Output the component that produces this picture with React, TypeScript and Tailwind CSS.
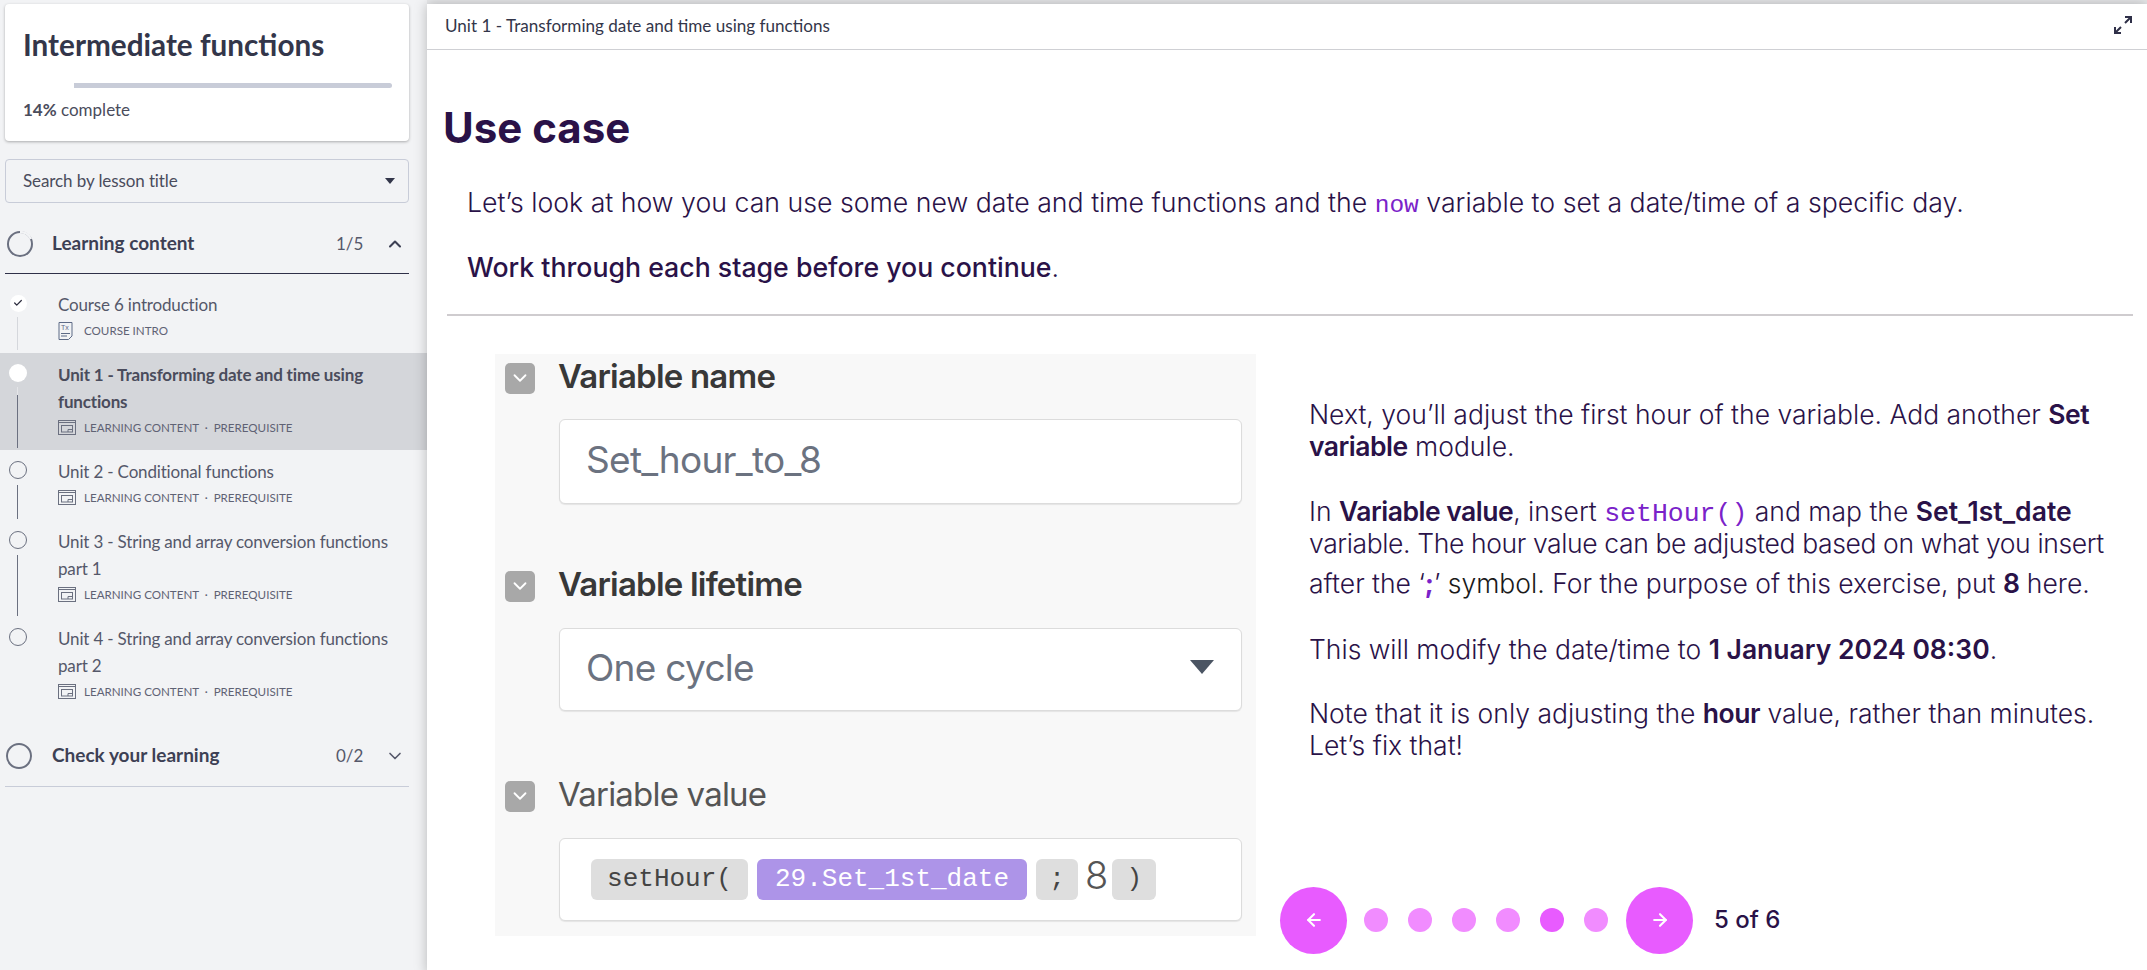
import React from "react";
import { ArrowLeft, ArrowRight, ChevronDown, ChevronUp, Check } from "lucide-react";

const side = "font-['Lato','Noto_Sans',sans-serif]";

function ContentIcon() {
  return (
    <svg width="18" height="15" viewBox="0 0 18 15" fill="none" stroke="#6b7080" strokeWidth="1" className="shrink-0">
      <rect x="0.5" y="0.5" width="17" height="14" />
      <path d="M0.5 2.5H17.5" />
      <rect x="3.5" y="5.5" width="11" height="6.5" />
      <path d="M10 12V9.5H14.5" />
    </svg>
  );
}

function DocIcon() {
  return (
    <svg width="15" height="18" viewBox="0 0 15 18" fill="none" stroke="#5d6a86" strokeWidth="1" className="shrink-0">
      <path d="M1 .5H14V14L10.5 17.5H1Z" />
      <path d="M3 11.5H12M3 14H9" />
      <text x="3" y="8" fontSize="7" fill="#5d6a86" stroke="none" fontFamily="Liberation Sans, sans-serif">Tx</text>
    </svg>
  );
}

type Item = {
  title: string[];
  sub: string;
  kind: "done" | "active" | "todo";
  line: "light" | "mixed" | "dark" | "none";
  doc?: boolean;
};

const items: Item[] = [
  { title: ["Course 6 introduction"], sub: "COURSE INTRO", kind: "done", line: "light", doc: true },
  { title: ["Unit 1 - Transforming date and time using", "functions"], sub: "LEARNING CONTENT  ·  PREREQUISITE", kind: "active", line: "mixed" },
  { title: ["Unit 2 - Conditional functions"], sub: "LEARNING CONTENT  ·  PREREQUISITE", kind: "todo", line: "dark" },
  { title: ["Unit 3 - String and array conversion functions", "part 1"], sub: "LEARNING CONTENT  ·  PREREQUISITE", kind: "todo", line: "dark" },
  { title: ["Unit 4 - String and array conversion functions", "part 2"], sub: "LEARNING CONTENT  ·  PREREQUISITE", kind: "todo", line: "none" },
];

function Row({ item }: { item: Item }) {
  const active = item.kind === "active";
  return (
    <div className={`flex pt-[8px] pb-[10px] pl-[9px] ${active ? "bg-[#d4d6da]" : ""}`}>
      <div className="w-[49px] shrink-0 flex flex-col items-start">
        <div className="w-[18px] h-[18px] mt-[3px] flex items-center justify-center shrink-0">
          {item.kind === "done" && (
            <div className="w-[17px] h-[17px] rounded-full bg-white flex items-center justify-center">
              <Check size={10} strokeWidth={3} color="#2d2d3f" />
            </div>
          )}
          {item.kind === "active" && <div className="w-[18px] h-[18px] rounded-full bg-white" />}
          {item.kind === "todo" && <div className="w-[18px] h-[18px] rounded-full border border-[#6b7080]" />}
        </div>
        {item.line === "light" && <div className="w-px flex-1 ml-[8px] mt-[5px] -mb-[7px] bg-[#d5d7dc]" />}
        {item.line === "dark" && <div className="w-px flex-1 ml-[8px] mt-[6px] -mb-[9px] bg-[#6b7080]" />}
        {item.line === "mixed" && (
          <div className="w-px flex-1 ml-[8px] mt-[5px] -mb-[8px] flex flex-col">
            <div className="h-[8px] bg-[#e4e5e8]" />
            <div className="flex-1 bg-[#6b7080]" />
          </div>
        )}
      </div>
      <div className="flex-1">
        {item.title.map((t) => (
          <div key={t} className={`text-[17px] leading-[27px] tracking-[-0.17px] whitespace-nowrap ${active ? "font-bold text-[#4a4c5c]" : "text-[#55586a]"}`}>
            {t}
          </div>
        ))}
        <div className="h-[25px] flex items-center gap-[8px]">
          {item.doc ? <span className="w-[18px] flex"><DocIcon /></span> : <ContentIcon />}
          <span className="text-[11.6px] text-[#5f6274] whitespace-pre">{item.sub}</span>
        </div>
      </div>
    </div>
  );
}

function Sidebar() {
  return (
    <aside className={`w-[427px] shrink-0 h-full bg-[#f2f3f5] pt-[4px] ${side}`}>
      <div className="mx-[5px] w-[404px] h-[137px] bg-white rounded-[4px] shadow-[0_1px_3px_rgba(0,0,0,0.3)] pl-[18px] pr-[17px] pt-[22px]">
        <h1 className="text-[29.7px] leading-[38px] font-bold text-[#33364a] whitespace-nowrap">Intermediate functions</h1>
        <div className="mt-[19px] h-[5px] flex">
          <div className="w-[51px] bg-white" />
          <div className="flex-1 bg-[#c8ccd8] rounded-r-[3px]" />
        </div>
        <div className="mt-[11px] text-[17px] leading-[22px] text-[#4a4c5c]">
          <span className="font-bold">14%</span> complete
        </div>
      </div>
      <div className="mx-[5px] w-[404px] mt-[18px] h-[44px] border border-[#c8ccd8] rounded-[4px] flex items-center justify-between pl-[17px] pr-[13px]">
        <span className="text-[17px] text-[#4a4c5c] tracking-[-0.1px]">Search by lesson title</span>
        <svg width="10" height="6" viewBox="0 0 10 6" fill="#33364a"><path d="M0 0H10L5 6Z" /></svg>
      </div>
      <div className="mx-[5px] w-[404px] mt-[19px] h-[52px] border-b border-[#2f3048] flex items-center pb-[8px]">
        <svg width="28" height="28" viewBox="0 0 28 28" fill="none" className="ml-[1px] shrink-0">
          <circle cx="14" cy="14" r="12" stroke="#6b7080" strokeWidth="2" />
          <path d="M14 2A12 12 0 0 1 25 9" stroke="#f2f3f5" strokeWidth="2.6" />
        </svg>
        <span className="ml-[18px] text-[19px] font-bold text-[#3d4054] flex-1 whitespace-nowrap">Learning content</span>
        <span className="text-[17px] text-[#55586a] w-[27px] whitespace-nowrap">1/5</span>
        <ChevronUp size={20} strokeWidth={2.5} color="#3d4054" className="ml-[22px] mr-[4px]" />
      </div>
      <div className="mt-[9px]">
        {items.map((i) => (
          <Row key={i.title[0]} item={i} />
        ))}
      </div>
      <div className="mx-[5px] w-[404px] mt-[21px] h-[52px] border-b border-[#c8ccd8] flex items-center pb-[10px]">
        <div className="w-[26px] h-[26px] ml-[1px] rounded-full border-2 border-[#6b7080] shrink-0" />
        <span className="ml-[20px] text-[19px] font-bold text-[#3d4054] flex-1 whitespace-nowrap">Check your learning</span>
        <span className="text-[17px] text-[#55586a] w-[27px] whitespace-nowrap">0/2</span>
        <ChevronDown size={20} strokeWidth={2} color="#55586a" className="ml-[22px] mr-[4px]" />
      </div>
    </aside>
  );
}

function ChevronBox() {
  return (
    <div className="w-[30px] h-[31px] rounded-[5px] bg-[#a8a8a8] flex items-center justify-center shrink-0">
      <ChevronDown size={22} strokeWidth={2} color="#fff" />
    </div>
  );
}

function Field({ label, bold, children, className }: { label: string; bold?: boolean; children: React.ReactNode; className: string }) {
  return (
    <div>
      <div className="flex items-center h-[31px] pl-[10px]">
        <ChevronBox />
        <span className={`ml-[23px] -mt-[3px] text-[33px] tracking-[-0.8px] whitespace-nowrap ${bold ? "font-semibold text-[#383838]" : "text-[#555]"}`}>{label}</span>
      </div>
      <div className={`ml-[64px] w-[683px] bg-white border border-[#dcdcdc] rounded-[6px] shadow-[0_1px_1px_rgba(0,0,0,0.08)] ${className}`}>{children}</div>
    </div>
  );
}

function Chip({ children, w }: { children: React.ReactNode; w: string }) {
  return <div className={`h-[41px] rounded-[6px] bg-[#dedede] flex items-center justify-center font-['Liberation_Mono',monospace] text-[26px] text-[#444] ${w}`}>{children}</div>;
}

function VariablePanel() {
  return (
    <div className="w-[761px] h-[582px] shrink-0 bg-[#f8f8f8] pt-[9px] flex flex-col">
      <Field label="Variable name" bold className="mt-[25px] h-[85px] flex items-center pl-[26px]">
        <span className="text-[37px] text-[#6b7280] tracking-[-0.7px] -mt-[2px]">Set_hour_to_8</span>
      </Field>
      <div className="mt-[67px]">
        <Field label="Variable lifetime" bold className="mt-[26px] h-[83px] flex items-center justify-between pl-[26px] pr-[27px]">
          <span className="text-[37px] text-[#6b7280] tracking-[-0.7px] -mt-[2px]">One cycle</span>
          <svg width="24" height="14" viewBox="0 0 24 14" fill="#4b5563" className="-mt-[5px]"><path d="M0 0H24L12 14Z" /></svg>
        </Field>
      </div>
      <div className="mt-[70px]">
        <Field label="Variable value" className="mt-[26px] h-[83px] flex items-center pl-[31px] gap-[9px]">
          <Chip w="w-[157px]">setHour(</Chip>
          <div className="h-[41px] w-[270px] rounded-[6px] bg-[#ad94e8] flex items-center justify-center font-['Liberation_Mono',monospace] text-[26px] text-white">29.Set_1st_date</div>
          <Chip w="w-[42px]">;</Chip>
          <span className="text-[38px] text-[#555] -ml-[2px] -mt-[8px] font-light">8</span>
          <Chip w="w-[44px] -ml-[5px]">)</Chip>
        </Field>
      </div>
    </div>
  );
}

function Pager() {
  const dots = [0, 1, 2, 3, 4, 5];
  return (
    <div className="flex items-center h-[67px]">
      <button className="w-[67px] h-[67px] rounded-full bg-[#e85bff] flex items-center justify-center">
        <ArrowLeft size={20} strokeWidth={2.5} color="#fff" />
      </button>
      <div className="flex items-center gap-[20px] ml-[17px] mr-[18px]">
        {dots.map((d) => (
          <div key={d} className={`w-[24px] h-[24px] rounded-full ${d === 4 ? "bg-[#e85bff]" : "bg-[#f18cff]"}`} />
        ))}
      </div>
      <button className="w-[67px] h-[67px] rounded-full bg-[#e85bff] flex items-center justify-center">
        <ArrowRight size={20} strokeWidth={2.5} color="#fff" />
      </button>
      <span className="ml-[21px] text-[24px] font-medium text-[#2a1248]">5 of 6</span>
    </div>
  );
}

function Main() {
  const code = "font-['Liberation_Mono',monospace] leading-none font-normal text-[#7a22c9]";
  const strong = "font-semibold tracking-[-0.5px]";
  return (
    <main className="relative z-10 flex-1 min-w-0 h-full bg-white mt-[4px] shadow-[0_0_12px_rgba(0,0,0,0.25)] font-['Inter',sans-serif] text-[#2a1248]">
      <header className={`h-[46px] border-b border-[#cfd0d4] flex items-center justify-between pl-[18px] pr-[15px] ${side}`}>
        <span className="text-[17.1px] text-[#33364a] -mt-[2px]">Unit 1 - Transforming date and time using functions</span>
        <svg width="18" height="18" viewBox="0 0 18 18" fill="none" stroke="#2f3048" strokeWidth="2" className="-mt-[3px]">
          <path d="M11 1H17V7M17 1L11 7M1 11V17H7M1 17L7 11" />
        </svg>
      </header>
      <div className="pl-[16px]">
        <h2 className="mt-[50px] text-[42px] leading-[56px] font-bold text-[#2a1248]">Use case</h2>
        <p className="mt-[30px] ml-[24px] text-[26.7px] leading-[32px] whitespace-nowrap font-light">
          Let’s look at how you can use some new date and time functions and the <span className={`${code} text-[24.5px]`}>now</span> variable to set a date/time of a specific day.
        </p>
        <p className="mt-[32px] ml-[24px] text-[26.7px] leading-[32px] whitespace-nowrap font-medium">
          Work through each stage before you continue<span className="font-light">.</span>
        </p>
        <div className="mt-[31px] ml-[4px] w-[1686px] h-[2px] bg-[#cfcccf]" />
        <div className="mt-[38px] ml-[52px] flex">
          <VariablePanel />
          <div className="ml-[53px] flex flex-col h-[600px] justify-between">
            <div className="w-[820px] mt-[44px] text-[26.5px] leading-[32px] font-light whitespace-nowrap">
              <p>Next, you’ll adjust the first hour of the variable. Add another <b className={strong}>Set</b><br /><b className={strong}>variable</b> module.</p>
              <p className="mt-[33px]">In <b className={strong}>Variable value</b>, insert <span className={`${code} text-[26.5px]`}>setHour()</span> and map the <b className="font-semibold">Set_1st_date</b></p>
              <p className="tracking-[-0.38px]">variable. The hour value can be adjusted based on what you insert</p>
              <p className="mt-[8px]">after the ‘<b className="font-bold text-[#7a22c9]">;</b>’ <span className="text-[#1a1a1a]">symbol.</span> For the purpose of this exercise, put <b className={strong}>8</b> here.</p>
              <p className="mt-[34px]">This will modify the date/time to <b className="font-semibold">1 January 2024 08:30</b>.</p>
              <p className="mt-[32px]">Note that it is only adjusting the <b className={strong}>hour</b> value, rather than minutes.<br />Let’s fix that!</p>
            </div>
            <div className="-ml-[29px]">
              <Pager />
            </div>
          </div>
        </div>
      </div>
    </main>
  );
}

export default function App() {
  return (
    <div className="flex w-[2147px] h-[970px] overflow-hidden bg-[#e8e9eb]">
      <Sidebar />
      <Main />
    </div>
  );
}
